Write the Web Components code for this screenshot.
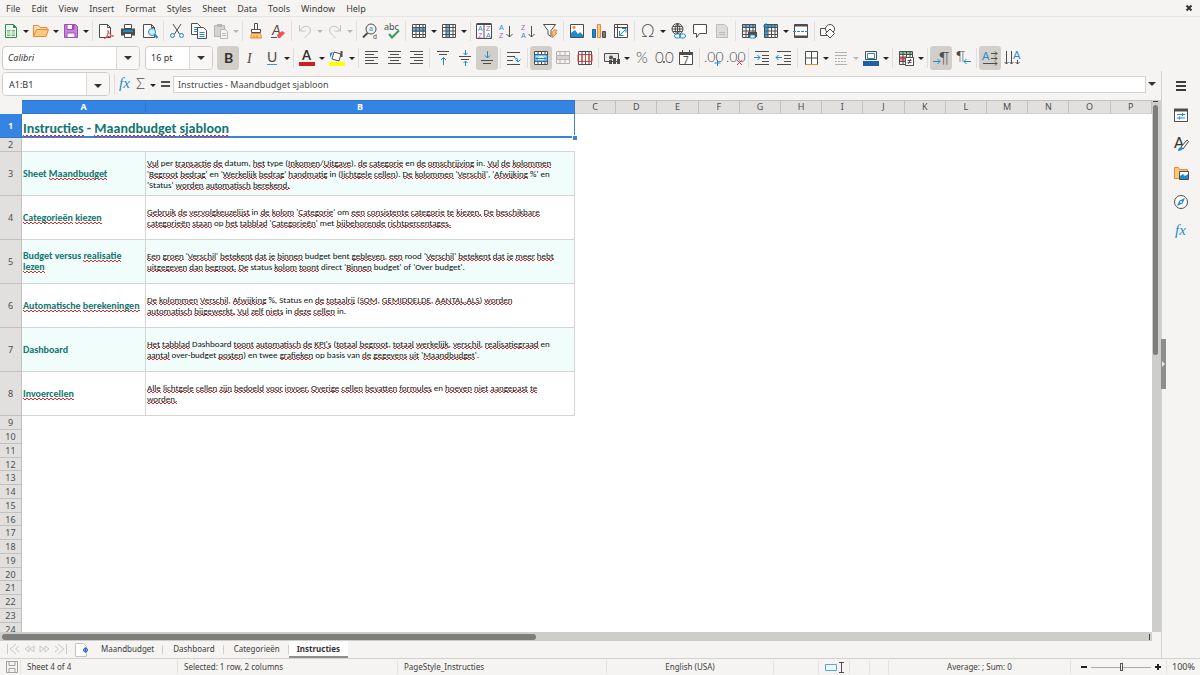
<!DOCTYPE html>
<html lang="nl">
<head>
<meta charset="utf-8">
<meta name="viewport" content="width=device-width, initial-scale=1">
<title>Maandbudget - Calc</title>
<style>
html, body { margin: 0; height: 100%; }
body { font-family: "Noto Sans", sans-serif; font-size: 9px; color: #3d3d3d; background: #f5f4f2; overflow: hidden; }
</style>
</head>
<body>
<calc-window></calc-window>
<script>
const G = '#4d4d4d', B = '#1e8bcd', R = '#e03b3b', O = '#ed8733', V = '#b25bc4';
const line = (d, c = G, w = 1) => `<path d="${d}" fill="none" stroke="${c}" stroke-width="${w}"/>`;
const fill = (d, c, s = 'none') => `<path d="${d}" fill="${c}" stroke="${s}"/>`;
const glyph = (t, x, y, s, c = G, extra = '') => `<text x="${x}" y="${y}" font-size="${s}" fill="${c}" ${extra}>${t}</text>`;
const small = (t, x, y, c) => glyph(t, x, y, 7, c, 'font-family="Liberation Sans"');
const light = (t, x, y, s) => glyph(t, x, y, s, G, 'font-family="Lato" font-weight="300"');
const grid = (c = G) => line('M1.5 1.5h13v13h-13zM1.5 4.5h13M1.5 8h13M1.5 11.5h13M5 1.5v13M8.5 1.5v13M12 1.5v13', c);

const ICONS = {
  new: fill('M2.5 1.5h8l3 3v10h-11z', '#fff', '#309048') + fill('M10 1v4h4z', '#309048') + fill('M4 7h8v6H4z', '#63bb7d') + line('M4 9h8M4 11h8M8 7v6', '#fff'),
  open: fill('M.5 13.5v-11h5l1.5 2h7v3', '#fae0b0', O) + fill('M.5 13.5l3-7h12l-2.5 7z', '#f8c97f', O),
  save: fill('M1.5 1.5h11l2 2v11h-13z', '#c486d6', '#a549bb') + fill('M4 1.5h7v5H4z', '#fff', '#a549bb') + fill('M4 10h8v4.5H4z', '#fff', '#a549bb') + fill('M9 2h2v4H9z', '#a549bb'),
  pdf: fill('M1.5 1.5h8l3 3v10h-11z', '#fff', G) + line('M9.5 1.5v3h3') + fill('M6.5 15.5c3-2 4-5 3.5-8 1 4 3 5 5.5 5.5-3-.5-6 .5-9 2.500z', '#fff', R),
  print: fill('M4.5 1.5h7v4h-7z', '#fff', G) + fill('M1 5.5h14v7H1z', G) + fill('M3 7h10v2H3z', B) + fill('M4.5 10.5h7v4h-7z', '#fff', G),
  preview: fill('M1.5 1.5h8l3 3v10h-11z', '#fff', G) + line('M9.5 1.5v3h3') + `<circle cx="10" cy="9" r="3.5" fill="#d6ebf8" stroke="${B}"/>` + line('M12.5 11.5l3 3.500', B, 2),
  cut: line('M4 1l6.5 10M12 1L5.5 11') + `<circle cx="3.5" cy="12.5" r="2" fill="none" stroke="${B}"/><circle cx="12.5" cy="12.5" r="2" fill="none" stroke="${B}"/>`,
  copy: fill('M.5 .5h6l3 3v8h-9z', '#fff', G) + line('M3 4.5h4M3 6.5h4M3 8.5h3', B) + fill('M6.5 4.5h6l3 3v8h-9z', '#fff', G) + line('M8.5 9.5h5M8.5 11.5h5M8.5 13.5h5', B),
  paste: fill('M1.5 2.5h10v11h-10z', '#d4d4d4', '#b5b5b5') + fill('M4 1h5v3H4z', '#b5b5b5') + fill('M7.5 6.5h5l2 2v7h-7z', '#f4f4f4', '#b5b5b5') + line('M9 10.5h4M9 12.5h4', '#b5b5b5'),
  clone: fill('M6.5 .5h3v6h-3z', '#fff', G) + fill('M3.5 6.5h9v3h-9z', '#fff', G) + fill('M3.5 10.5h9l1 4.5h-11z', '#f8c97f', O) + line('M6 12v3M9 12v3', O),
  clear: glyph('A', 2, 12, 14, G, 'font-family="Lato" font-style="italic"') + fill('M7 12l5-4 3 2-5 5h-2z', '#ef5350') + line('M1 14.5h6', G),
  undo: line('M2.5 2v6h6M3 7.5C6 2 13 2 13.5 7 13.5 10 10 12 7.5 15', '#c3c2c0'),
  redo: line('M13.5 2v6h-6M13 7.5C10 2 3 2 2.5 7 2.5 10 6 12 8.5 15', '#c3c2c0'),
  find: `<circle cx="9" cy="6" r="5" fill="none" stroke="${G}"/>` + line('M5.5 10L1 14.5', G, 2) + small('a', 7, 8, B) + small('d', 11, 16, G),
  spell: glyph('abc', 0, 7, 9) + line('M5 11l3 3.5 7-7', '#34a05a', 2),
  row: fill('M1 1h14v14H1z', '#fff') + fill('M1 5h14v4H1z', '#64b0e4') + grid(),
  col: fill('M1 1h14v14H1z', '#fff') + fill('M5 1h4v14H5z', '#64b0e4') + grid(),
  sort: fill('M.5 1.5h15v14H.5z', '#fff', G) + line('M.5 1h15', G, 2) + line('M8 2v13') + small('A', 2, 8, B) + small('Z', 2, 15, V) + small('Z', 10, 8, V) + small('A', 10, 15, B),
  az: small('A', 1, 7, B) + small('Z', 1, 15, V) + line('M11.5 3v11M8.5 11l3 3 3-3'),
  za: small('Z', 1, 7, V) + small('A', 1, 15, B) + line('M11.5 3v11M8.5 11l3 3 3-3'),
  filter: fill('M1.5 1.5h12l-4.5 6v6l-3-2V7.5z', '#fff', G) + fill('M12 7h3l-2 3h2l-5 5 1-4H9z', '#f8c97f', O),
  image: fill('M1.5 1.5h13v13h-13z', '#fff', G) + fill('M2 14v-4l4-3 3 4 2-2 3 3v2z', B) + `<circle cx="5" cy="4.5" r="1.5" fill="${O}"/>`,
  chart: fill('M1.5 6.5h3v8h-3z', B, '#0f6aa5') + fill('M6.5 1.5h3v13h-3z', '#f8c97f', O) + fill('M11.5 8.5h3v6h-3z', '#7a7a7a', G),
  pivot: fill('M1.5 1.5h13v13h-13z', '#fff', G) + line('M1.5 4.5h13M4.5 1.5v13') + line('M6.5 8v4.5h4M6.5 12.5l6-6M9 5.5h4v4', B),
  omega: light('Ω', 1, 14, 17),
  link: `<circle cx="7.5" cy="6" r="5.5" fill="none" stroke="${G}"/>` + line('M2 6h11M3 3.5h9M3 8.5h9M7.5 .5v11M7.5 .5C4.5 3 4.5 9 7.5 11.5M7.5 .5C10.5 3 10.5 9 7.5 11.5') + `<rect x="4.5" y="11" width="6" height="4" rx="2" fill="#fff" stroke="${B}"/><rect x="9.5" y="11" width="6" height="4" rx="2" fill="none" stroke="${B}"/>`,
  comment: fill('M1.5 1.5h13v9h-7l-3 4v-4h-3z', '#fff', G),
  header: fill('M2.5 1.5h8l3 3v10h-11z', '#dcdcdc', '#bcbcbc') + line('M5 11.5h6M5 9.5h6', '#bcbcbc'),
  area: fill('M1 1h14v4H1z', '#64b0e4') + grid() + fill('M7 9h9v5H7z', G) + fill('M9 12h5v3H9z', '#fff', B),
  freeze: fill('M1 1h14v14H1z', '#fff') + fill('M1 1h14v4H1zM1 1h4v14H1z', '#64b0e4') + grid() + line('M3 0v14M0 3h13', B),
  split: fill('M1.5 1.5h13v13h-13z', '#fff', G) + line('M1.5 2.5h13M1.5 13.5h13', G, 2) + `<path d="M0 8.5h16" stroke="${B}" stroke-dasharray="3 1"/>`,
  draw: fill('M.5 5.5h8v7h-8z', '#fff', G) + `<circle cx="10" cy="6" r="4.5" fill="#fff" stroke="${G}"/>` + fill('M10 6l4.5 4.5L10 15l-4.5-4.500z', '#fff', G),
  bold: glyph('B', 4, 13, 14, '#333', 'font-family="Lato" font-weight="700"'),
  italic: glyph('I', 5, 13, 14, G, 'font-style="italic" font-family="Liberation Serif"'),
  underline: glyph('U', 3, 12, 14, G, 'font-family="Lato"') + line('M3 14.5h10', '#4a8fd9'),
  color: glyph('A', 3, 10, 13, '#333', 'font-family="Lato" font-weight="700"') + fill('M0 12h16v4H0z', '#c9211e'),
  highlight: fill('M5 2l7 2-2 7-7-2z', '#fff', G) + line('M12.5 1v6', G, 2) + fill('M1 8V3l3-1z', B) + fill('M0 12h16v4H0z', '#ffff00'),
  left: line('M1 1.5h13M1 4.5h9M1 7.5h13M1 10.5h9M1 13.5h13'),
  center: line('M2 1.5h13M4 4.5h9M2 7.5h13M4 10.5h9M2 13.5h13'),
  right: line('M2 1.5h13M6 4.5h9M2 7.5h13M6 10.5h9M2 13.5h13'),
  top: line('M2 1.5h12M4 4.5h8') + line('M8.5 15V7.5M6 10l2.5-2.5L11 10', B),
  middle: line('M2 6.5h12M4 9.5h8') + line('M8.5 0v5M6.5 3l2 2 2-2M8.5 16v-5M6.5 13l2-2 2 2', B),
  bottom: line('M2 10.5h12M4 13.5h8') + line('M8.5 1v7M6 5.5L8.5 8 11 5.5', B),
  wrap: line('M1 2.5h13M1 6.5h8M1 10.5h6M1 14.5h13') + line('M8 7.500q4 0 4 4M9.5 9.5l2.5 2.5 2.5-2.5', B),
  merge: fill('M1 1h14v14H1z', '#fff') + grid() + fill('M2 5h12v6H2z', '#d9edf9', B) + line('M3 8.5h10M5 6.5l-2 2 2 2M11 6.5l2 2-2 2', B),
  mergecells: line('M1.5 1.5h13v12h-13zM1.5 5.5h13M1.5 9.5h13M5 1.5v4M10 1.5v4M5 9.5v4M10 9.5v4', '#b4b3b1') + fill('M2 6h12v3H2z', '#d4d3d1'),
  unmerge: fill('M1 1h14v14H1z', '#fff') + line('M1.5 1.5h13v13h-13zM5 1.5v13M8.5 1.5v13M12 1.5v13') + line('M1 4.5h14v7H1zM5 5v6M8.5 5v6M12 5v6', R),
  currency: fill('M.5 3.5h14v8H.5z', '#e8e8e8', G) + `<circle cx="7" cy="7.5" r="2" fill="${G}"/>` + fill('M5 10h3v4H5zM9 8h3v6H9zM13 9h3v5h-3z', G),
  percent: light('%', 2, 13, 15),
  number: light('0', -1, 13, 15) + light('0', 9, 13, 15) + `<circle cx="8" cy="12" r="1" fill="${G}"/>`,
  date: fill('M1.5 3.5h13v11h-13z', '#fff', G) + fill('M1 2h14v3H1z', G) + line('M4.5 0v4M11.5 0v4') + glyph('7', 5, 14, 10),
  addpoint: light('.00', -1, 12, 14) + line('M12.5 10v6M9.5 13h6', B),
  delpoint: light('.00', -1, 12, 14) + line('M10 10l5 5M15 10l-5 5', R),
  indent: line('M1 1.5h14M8 5.5h7M8 8.5h7M1 14.5h14M8 11.5h7') + line('M0 7.5h6M3.5 5L6 7.5 3.5 10', B),
  outdent: line('M1 1.5h14M8 5.5h7M8 8.5h7M1 14.5h14M8 11.5h7') + line('M6 7.5H0M2.5 5L0 7.5 2.5 10', B),
  borders: fill('M2.5 1.5h12v13h-12z', '#fff', G) + line('M8.5 1.5v13M2.5 8h12') + line('M2.5 14.5h12', O),
  style: line('M2 2.5h12M2 5.5h12M2 14.5h12', '#b0afad') + `<path d="M2 8.5h12M2 11.5h12" stroke="#b0afad" stroke-dasharray="2 1"/>`,
  bcolor: fill('M2.5 1.5h11v8h-11z', '#fff', G) + line('M4.5 3.5h7v5h-7z', B) + fill('M0 11h16v5H0z', '#1d5fa8'),
  cond: fill('M2 2h12v3H2z', '#7cc88f') + fill('M2 6h6v5H2z', '#f08a85') + grid() + fill('M7.5 7.5h8v8h-8z', '#fff', G) + line('M9.5 10.5h4M9.5 12.5h4M13 9l-3 5'),
  ltr: light('¶', 6, 13, 16) + line('M0 11.5h7M4.5 9L7 11.5 4.5 14', B),
  rtl: light('¶', 1, 11, 14) + line('M16 11.5H9M11.5 9L9 11.5l2.5 2.500', B),
  horiz: glyph('A', 0, 10, 11, B, 'font-family="Lato"') + line('M9 3.5h6M13 1.5l2 2-2 2M9 8.5h6M13 6.5l2 2-2 2M1 13.5h14M13 11.5l2 2-2 2'),
  vert: glyph('A', 9, 9, 11, B, 'font-family="Lato"') + line('M2.5 1v13M.5 12l2 2 2-2M7.5 1v13M5.5 12l2 2 2-2M13.5 10v4M11.5 12l2 2 2-2'),
  fx: glyph('fx', 2, 12, 15, B, 'font-style="italic" font-family="Liberation Serif"'),
  sigma: light('Σ', 3, 13, 15),
  equals: line('M4 6h9M4 10h9', G, 2),
  menu: line('M3 4h10M3 8h10M3 12h10', '#3a3a3a', 2),
  properties: fill('M1.5 2.5h13v12h-13z', '#fff', G) + line('M1 3h14', G, 3) + line('M4 7.5h8M4 11h8M9.5 6v3M6.5 9.5v3', B),
  styles: glyph('A', 1, 12, 15, '#333', 'font-family="Lato"') + fill('M8 11l6-7 1.5 1.5L10 13z', '#fff', G) + fill('M5 15q0-4 4-4l1 2q-2 2-5 2z', B),
  gallery: fill('M1.5 13.5v-11h4l1 2h8v9z', '#f8c97f', O) + fill('M6.5 6.5h9v8h-9z', '#fff', G) + fill('M7 14v-3l3-2 2 2 3-2v5z', B),
  navigator: `<circle cx="8" cy="8" r="6.5" fill="#fff" stroke="${G}"/>` + fill('M12 4l-2.5 5.5L4 12l2.5-5.500z', B) + '<circle cx="8" cy="8" r="1" fill="#fff"/>',
  disk: fill('M2.5 2.5h11v11h-11z', '#f5f4f2', '#a0a09e') + line('M5 2.5v4h6v-4M5 13.5v-4h6v4', '#a0a09e'),
  addsheet: fill('M1.5 1.5h8l3 3v10h-11z', '#fff', '#c5c4c2') + `<circle cx="11.5" cy="8" r="2" fill="#fff" stroke="#2a65b5"/>` + line('M11.5 5.500v5M9 8h5', '#2a65b5'),
  select: fill('M.5 5.5h11v6H.5z', '#eef7fd', '#5aa7d6'),
  ibeam: line('M5 3.5h5M5 13.5h5M7.5 3.5v10')
};

class BaseElement extends HTMLElement {
  connectedCallback() {
    if (!this.shadowRoot) this.attachShadow({ mode: 'open' }).innerHTML = this.render();
  }
}
const reset = `:host,*{box-sizing:border-box} button{font:inherit;color:inherit;border:0;background:none;margin:0;padding:0}`;

customElements.define('app-icon', class extends BaseElement {
  render() {
    return `<style>:host{display:block;width:16px;height:16px;flex:none}svg{display:block;overflow:visible}</style>
      <svg width="16" height="16" viewBox="0 0 16 16" aria-hidden="true">${ICONS[this.getAttribute('name')] || ''}</svg>`;
  }
});

customElements.define('tool-button', class extends BaseElement {
  render() {
    const n = this.getAttribute('name');
    const dim = this.hasAttribute('dim') ? '#b8b7b5' : '#222';
    const drop = this.hasAttribute('drop') ? `<button class="drop" aria-label="${n} options"><svg width="6" height="3" viewBox="0 0 6 3"><path d="M0 0h6L3 3z" fill="${dim}"/></svg></button>` : '';
    return `<style>${reset}:host{display:flex;flex:none;height:24px}
      .main{width:var(--tool-width,22px);height:24px;display:grid;place-items:center;border-radius:3px}
      :host([active]) .main{background:#d2cfcb}
      .drop{width:8px;display:grid;place-items:center;padding-top:2px}</style>
      <button class="main" aria-label="${n}"><app-icon name="${n}"></app-icon></button>${drop}`;
  }
});

customElements.define('tool-separator', class extends BaseElement {
  render() { return `<style>:host{display:block;flex:none;width:1px;height:20px;margin:0 2px;background:#e0dfdd}</style>`; }
});

customElements.define('tool-bar', class extends BaseElement {
  render() {
    return `<style>:host{display:flex;align-items:center;height:27px;flex:none}</style><slot></slot>`;
  }
});

customElements.define('menu-bar', class extends BaseElement {
  render() {
    const items = ['File', 'Edit', 'View', 'Insert', 'Format', 'Styles', 'Sheet', 'Data', 'Tools', 'Window', 'Help'];
    return `<style>${reset}:host{display:flex;height:17px;flex:none;border-bottom:1px solid #e6e5e3;align-items:center;justify-content:space-between}
      nav{display:flex;gap:11px;padding-left:6px}.close{padding-right:7px;display:flex}</style>
      <nav>${items.map(i => `<button>${i}</button>`).join('')}</nav>
      <button class="close" aria-label="Close"><svg width="8" height="8" viewBox="0 0 8 8"><path d="M1.5 1.5l5 5M6.5 1.5l-5 5" stroke="#333" stroke-width="2"/></svg></button>`;
  }
});

customElements.define('drop-select', class extends BaseElement {
  render() {
    return `<style>${reset}:host{display:grid;flex:none;height:24px;grid-template-columns:1fr 23px;border:1px solid #cfccc9;border-radius:4px;background:#fff;overflow:hidden;color:#333}
      select{grid-area:1/1/2/3;font:inherit;color:inherit;appearance:none;border:0;background:none;padding:0 5px;height:22px;outline:0}
      :host([slanted]) select{font-style:italic}
      span{grid-area:1/2;display:grid;place-items:center;background:#f8f7f6;border-left:1px solid #dddbd8;pointer-events:none}</style>
      <select aria-label="${this.getAttribute('label')}"><option>${this.getAttribute('value')}</option></select>
      <span><svg width="8" height="4" viewBox="0 0 8 4"><path d="M0 0h8L4 4z" fill="#333"/></svg></span>`;
  }
});

customElements.define('formula-bar', class extends BaseElement {
  render() {
    const arrow = '<svg width="8" height="4" viewBox="0 0 8 4"><path d="M0 0h8L4 4z" fill="#333"/></svg>';
    return `<style>${reset}:host{display:flex;align-items:center;height:26px;flex:none;margin-bottom:3px;padding-left:2px}
      input{font:inherit;color:#333;border:0;outline:0;min-width:0;background:#fff}
      .name{display:flex;width:108px;height:24px;border:1px solid #cfccc9;border-radius:4px;overflow:hidden;background:#fff}
      .name input{flex:1;padding:0 6px}
      .name button{width:23px;background:#f8f7f6;border-left:1px solid #dddbd8}
      .ops{display:flex;align-items:center;padding-left:2px;--tool-width:16px}
      .formula{flex:1;height:17px;border:1px solid #d5d3d0;padding:0 4px;color:#4a4a4a}
      .expand{width:15px;display:grid;place-items:center;padding-right:4px}
      .line{width:1px;height:20px;background:#e0dfdd;margin-left:4px}</style>
      <div class="name"><input aria-label="Name Box" value="A1:B1"><button aria-label="Name list">${arrow}</button></div>
      <div class="line"></div>
      <div class="ops"><tool-button name="fx"></tool-button><tool-button name="sigma" drop></tool-button><tool-button name="equals"></tool-button></div>
      <input class="formula" aria-label="Formula" value="Instructies - Maandbudget sjabloon">
      <button class="expand" aria-label="Expand Formula Bar">${arrow}</button>`;
  }
});

/* Words the English dictionary accepts; every other word gets a red wave. */
const KNOWN = new Set(("Sheet per datum type en in Status status budget Budget versus om op met bent rood direct Over of " +
  "Dashboard over twee basis van").split(' '));
const spell = text => text.replace(/[\p{L}]+(?:[.'][\p{L}]+)*\.?/gu, w => KNOWN.has(w.replace(/\.$/, '')) ? w : `<span class="sp">${w}</span>`);
const ROWS = [
  ['Sheet Maandbudget', "Vul per transactie de datum, het type (Inkomen/Uitgave), de categorie en de omschrijving in. Vul de kolommen|'Begroot bedrag' en 'Werkelijk bedrag' handmatig in (lichtgele cellen). De kolommen 'Verschil', 'Afwijking %' en|'Status' worden automatisch berekend."],
  ['Categorieën kiezen', "Gebruik de vervolgkeuzelijst in de kolom 'Categorie' om een consistente categorie te kiezen. De beschikbare|categorieën staan op het tabblad 'Categorieën' met bijbehorende richtpercentages."],
  ['Budget versus realisatie|lezen', "Een groen 'Verschil' betekent dat je binnen budget bent gebleven, een rood 'Verschil' betekent dat je meer hebt|uitgegeven dan begroot. De status kolom toont direct 'Binnen budget' of 'Over budget'."],
  ['Automatische berekeningen', "De kolommen Verschil, Afwijking %, Status en de totaalrij (SOM, GEMIDDELDE, AANTAL.ALS) worden|automatisch bijgewerkt. Vul zelf niets in deze cellen in."],
  ['Dashboard', "Het tabblad Dashboard toont automatisch de KPI's (totaal begroot, totaal werkelijk, verschil, realisatiegraad en|aantal over-budget posten) en twee grafieken op basis van de gegevens uit 'Maandbudget'."],
  ['Invoercellen', "Alle lichtgele cellen zijn bedoeld voor invoer. Overige cellen bevatten formules en hoeven niet aangepast te|worden."]
];
const WAVE = "url(\"data:image/svg+xml,%3Csvg xmlns='http://www.w3.org/2000/svg' width='4' height='2'%3E%3Cpath d='M0 0L2 2L4 0' fill='none' stroke='%23e0282c'/%3E%3C/svg%3E\")";

customElements.define('sheet-grid', class extends BaseElement {
  render() {
    const cols = [...'CDEFGHIJKLMNOP'];
    const html = t => t.split('|').map(spell).join('<br>');
    const rest = '<td colspan="14"></td>';
    const blank = Array.from({ length: 16 }, (_, i) => `<tr class="plain"><th scope="row">${i + 9}</th><td colspan="16"></td></tr>`).join('');
    return `<style>${reset}
      :host{display:block;overflow:hidden;background:#fff;min-height:0;min-width:0}
      table{width:100%;table-layout:fixed;border-collapse:separate;border-spacing:0}
      .h{width:22px}.a{width:124px}.b{width:429px}
      th{font-weight:400;background:#e1e0df;color:#4d4d4d;padding:0;border:0 solid #c2c1bf;border-width:0 1px 1px 0;overflow:hidden;line-height:12px}
      thead th{height:14px;border-top:1px solid #c2c1bf;border-bottom-color:#cfcecc}
      thead th:first-child{background:#f5f4f2;border-color:#f5f4f2}
      th.on{background:#3584e4;color:#fff;font-weight:700;border-color:#2f76cc}
      td{padding:0}
      .title{height:24px}
      .title td.t{position:relative;font:bold 14px/16px Carlito,Lato,sans-serif;color:#0f766e;padding:6px 0 0 1px;white-space:nowrap;box-shadow:inset -1px -2px #3584e4}
      .knob{position:absolute;right:-2px;bottom:-2px;width:4px;height:4px;background:#3584e4;outline:1px solid #fff}
      .gap{height:14px}.gap td.t{border-bottom:1px solid #d3d6d5}
      .data{height:44px}
      .data td{font-family:Carlito,Lato,sans-serif;line-height:11px;white-space:nowrap;vertical-align:middle}
      .data td.k{font-size:10px;font-weight:700;color:#0f766e;padding-left:1px}
      .data td.v{font-size:9px;color:#111;padding-left:1px}
      .data td.k,.data td.v{border:0 solid #d3d6d5;border-width:0 1px 1px 0;padding-bottom:1px}
      .data:nth-child(odd) td.k,.data:nth-child(odd) td.v{background:#f0fdfa}
      .plain{height:14px}.plain:nth-child(4n){height:13px}.plain:nth-child(4n) th{line-height:11px}
      .sp{background:${WAVE} left bottom/4px 2px repeat-x}
      </style>
      <table><colgroup><col class="h"><col class="a"><col class="b">${cols.map(() => '<col>').join('')}</colgroup>
      <thead><tr><th></th><th class="on" scope="col">A</th><th class="on" scope="col">B</th>${cols.map(c => `<th scope="col">${c}</th>`).join('')}</tr></thead>
      <tbody><tr class="title"><th class="on" scope="row">1</th><td class="t" colspan="2">${spell('Instructies - Maandbudget sjabloon')}<i class="knob"></i></td>${rest}</tr>
      <tr class="gap"><th scope="row">2</th><td class="t" colspan="2"></td>${rest}</tr>
      ${ROWS.map((r, i) => `<tr class="data"><th scope="row">${i + 3}</th><td class="k">${html(r[0])}</td><td class="v">${html(r[1])}</td>${rest}</tr>`).join('')}
      ${blank}</tbody></table>`;
  }
});

customElements.define('scroll-track', class extends BaseElement {
  render() {
    return `<style>${reset}:host{display:flex;background:#cdcdcc}
      i{background:#7d7d7b;border-radius:3px}b{background:#444}
      :host([dir-y]){flex-direction:column;padding:1px 3px 0 1px}
      :host([dir-y]) i{order:2;height:47%;margin-top:3px}
      :host([dir-y]) b{order:1;height:1px}
      :host([dir-x]){padding:2px 2px 1px 2px}
      :host([dir-x]) i{flex:534}:host([dir-x]) s{flex:614}
      :host([dir-x]) b{width:1px}</style><i></i><s></s><b></b>`;
  }
});

customElements.define('sheet-tabs', class extends BaseElement {
  render() {
    const tabs = ['Maandbudget', 'Dashboard', 'Categorieën', 'Instructies'];
    const nav = (d, l) => `<button class="nav" aria-label="${l}"><svg width="14" height="12" viewBox="0 0 14 12"><path d="${d}" fill="none" stroke="#c9c8c6"/></svg></button>`;
    return `<style>${reset}:host{display:flex;align-items:stretch;height:17px;font-size:8px}
      .navs{display:flex;align-items:center;padding-left:5px;width:73px}.nav{width:16px}
      .add{width:18px;display:grid;place-items:center}
      [role=tablist]{display:flex}
      [role=tab]{padding:0 9px 2px 10px;position:relative}
      [role=tab]+[role=tab]::before{content:"";position:absolute;left:-1px;top:4px;width:1px;height:9px;background:#cfcecc}
      [role=tab][aria-selected=true]{padding:0 8px;font-weight:700;background:#fff;border-bottom:2px solid #8e8e8c;color:#333}</style>
      <div class="navs">${nav('M1.5 1v10M10 1L4 6l6 5M13 3L9.5 6l3.5 3', 'First sheet')}${nav('M7 3L3 6l4 3zM12 3L8 6l4 3z', 'Previous sheet')}${nav('M2 3l4 3-4 3zM7 3l4 3-4 3z', 'Next sheet')}${nav('M12.5 1v10M4 1l6 5-6 5M1 3l3.5 3L1 9', 'Last sheet')}</div>
      <button class="add" aria-label="Add sheet"><app-icon name="addsheet"></app-icon></button>
      <div role="tablist">${tabs.map((t, i) => `<button role="tab" aria-selected="${i === 3}">${t}</button>`).join('')}</div>`;
  }
});

customElements.define('side-bar', class extends BaseElement {
  render() {
    return `<style>${reset}:host{display:flex;flex-direction:column;align-items:center;position:relative;border-left:1px solid #d3d1ce}
      button{width:29px;height:29px;display:grid;place-items:center}
      button:first-child{height:27px;margin-bottom:2px}
      .grip{position:absolute;left:-1px;top:268px;width:5px;height:50px;background:#8e8e8c}
      </style>
      ${['menu', 'properties', 'styles', 'gallery', 'navigator', 'fx'].map(n => `<button aria-label="${n}"><app-icon name="${n}"></app-icon></button>`).join('')}
      <button class="grip" aria-label="Hide sidebar"><svg width="3" height="6" viewBox="0 0 3 6"><path d="M0 0v6l3-3z" fill="#e8e8e8"/></svg></button>`;
  }
});

customElements.define('status-bar', class extends BaseElement {
  render() {
    return `<style>${reset}:host{display:grid;grid-template-columns:21px 157fr 220fr 209fr 167fr 45px 31px 20px 19px 182fr 96px 33px;height:17px;flex:none;border-top:1px solid #d3d1ce;font-size:8px;align-items:center}
      div{height:14px;line-height:14px;padding-left:6px;border-right:1px solid #e3e2e0;white-space:nowrap;overflow:hidden}
      div:last-child{border:0;padding-left:5px;font-size:9px}.c{text-align:center;padding:0}
      .i{display:flex;align-items:center}.first{padding-left:4px}
      .zoom{display:flex;align-items:center;gap:3px;padding:0 4px 0 9px}
      .zoom button{width:8px;height:8px;flex:none;display:flex}
      .ibeam{margin-left:-7px}
      input{appearance:none;flex:1;min-width:0;height:9px;margin:0;background:linear-gradient(#aaa,#aaa) center/100% 1px no-repeat}
      input::-webkit-slider-thumb{appearance:none;width:3px;height:8px;background:#f5f4f2;border:1px solid #555}</style>
      <div class="i first"><app-icon name="disk"></app-icon></div><div>Sheet 4 of 4</div><div>Selected: 1 row, 2 columns</div><div>PageStyle_Instructies</div><div class="c">English (USA)</div><div></div>
      <div class="i"><app-icon name="select"></app-icon><app-icon name="ibeam" class="ibeam"></app-icon></div><div></div><div></div><div class="c">Average: ; Sum: 0</div>
      <div class="zoom"><button aria-label="Zoom out"><svg width="8" height="8"><path d="M1 4h6" stroke="#222" stroke-width="2"/></svg></button><input type="range" aria-label="Zoom" value="50"><button aria-label="Zoom in"><svg width="8" height="8"><path d="M1 4h6M4 1v6" stroke="#222" stroke-width="2"/></svg></button></div><div>100%</div>`;
  }
});

customElements.define('calc-window', class extends BaseElement {
  render() {
    const tools = s => s.split(' ').map(t => t === '|' ? '<tool-separator></tool-separator>' :
      `<tool-button name="${t.replace(/[+*!]/g, '')}"${/\+/.test(t) ? ' drop' : ''}${/!/.test(t) ? ' dim' : ''}${/\*/.test(t) ? ' active' : ''}></tool-button>`).join('');
    return `<style>:host{display:flex;flex-direction:column;height:100vh}
      .body{flex:1;min-height:0;display:grid;grid-template-columns:minmax(0,1fr) 39px}
      .left{display:flex;flex-direction:column;min-height:0;min-width:0}
      .sheet{flex:1;min-height:0;display:grid;grid-template:minmax(0,1fr) 9px / minmax(0,1fr) 9px}
      .font{width:138px;margin:0 5px 0 2px}.size{width:68px;margin-right:4px}</style>
      <menu-bar></menu-bar>
      <tool-bar>${tools('new+ open+ save+ | pdf print preview | cut copy paste+! | clone clear | undo+! redo+! | find spell | row+ col+ | sort az za filter | image chart pivot | omega+ link comment header | area freeze+ split | draw')}</tool-bar>
      <tool-bar><drop-select class="font" slanted label="Font Name" value="Calibri"></drop-select><drop-select class="size" label="Font Size" value="16 pt"></drop-select>${tools('bold* italic underline+ | color+ highlight+ | left center right | top middle bottom* | wrap | merge* mergecells unmerge | currency+ percent number date | addpoint delpoint | indent outdent | borders+ style+! bcolor+ | cond+ | ltr* rtl | horiz* vert')}</tool-bar>
      <div class="body"><div class="left"><formula-bar></formula-bar>
        <div class="sheet"><sheet-grid></sheet-grid><scroll-track dir-y></scroll-track><scroll-track dir-x></scroll-track></div>
        <sheet-tabs></sheet-tabs></div><side-bar></side-bar></div>
      <status-bar></status-bar>`;
  }
});
</script>
</body>
</html>
